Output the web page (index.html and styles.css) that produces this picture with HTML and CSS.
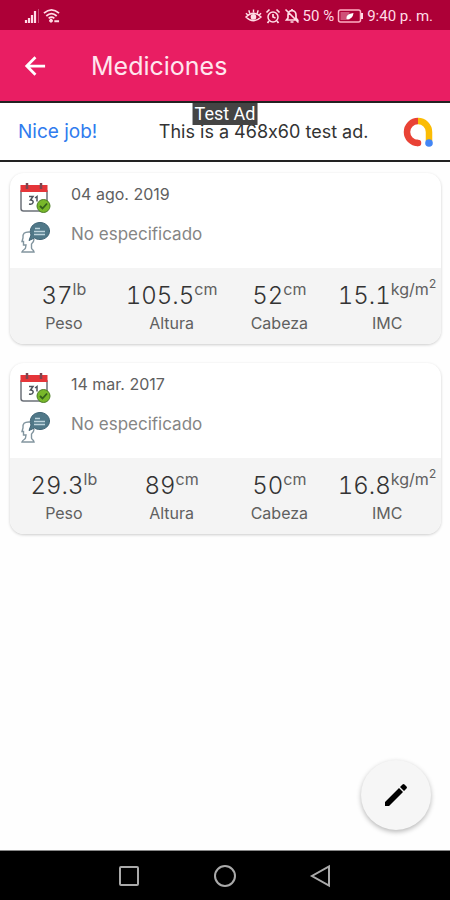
FILE: index.html
```html
<!DOCTYPE html>
<html lang="es">
<head>
<meta charset="utf-8">
<meta name="viewport" content="width=device-width, initial-scale=1">
<title>Mediciones</title>
<link rel="stylesheet" href="styles.css">
</head>
<body>
<svg class="defs" aria-hidden="true">
  <symbol id="calendar" viewBox="0 0 32 32">
    <path d="M2 10h26v17.500a2.500 2.500 0 0 1-2.500 2.500h-21A2.500 2.500 0 0 1 2 27.500z" fill="#fff" stroke="#6b7078" stroke-width="1.500"/>
    <path d="M1.500 4h27v7h-27z" fill="#e53539"/>
    <path d="M8 2v6M22 2v6" stroke="#7c4650" stroke-width="2.500"/>
    <path d="M10 15.500h4l-2.500 3.500c4 0 3.500 5-1.500 4M16 17l2-1.500v5" fill="none" stroke="#50565f" stroke-width="1.500"/>
    <circle cx="24.500" cy="25" r="6.500" fill="#78b82a" stroke="#4c7d26"/>
    <path d="m21 25 2.500 2.500 4.500-5" fill="none" stroke="#34611c" stroke-width="1.800"/>
  </symbol>
  <symbol id="comment" viewBox="0 0 32 32">
    <path d="M11 11C5 10.500 3.500 13 4 17l-1 3.500h1.500V24H7l-.5 3c0 1.500-3 1.500-3.500 4h12c-.5-2.500-2.500-2.500-2.500-4v-4c2-1.500 2.500-3 2.500-5" fill="#fff" stroke="#82959f" stroke-width="1.400"/>
    <path d="M21 1.500c5.500 0 9.500 4 9.500 8.500s-4 8.500-9.500 8.500c-2 0-4-.5-5.500-1.500L10 19.500l2-5.500C9.500 7.500 14 1.500 21 1.500z" fill="#507888" stroke="#406577"/>
    <path d="M16 7.500h5M15 10.500h11M15 13.500h11" stroke="#bdd4dd" stroke-width="1.500"/>
  </symbol>
</svg>

<div class="status">
  <div class="status-group">
    <svg class="signal" viewBox="0 0 16 16" aria-hidden="true"><path d="M2 12v3M5 10v5M8 7v8M11 3v12" stroke="#ffdce6" stroke-width="2.200"/><path d="M14.500 1v14" stroke="#c94a75"/></svg>
    <svg class="wifi" viewBox="0 0 18 16" aria-hidden="true"><path d="M1 5q8-7 16 0M3.500 8q5.500-5 11 0M6 10.500q3-2.500 6 0" fill="none" stroke="#ffdce6" stroke-width="1.900"/><path d="M8.500 11v4M6.500 13h4M12 13.500h5" stroke="#ffdce6" stroke-width="2.200"/></svg>
  </div>
  <div class="status-group">
    <svg class="eye" viewBox="0 0 18 16" aria-hidden="true"><path d="M1 9q8-8 16 0-8 8-16 0zM9 1v3M4 2l1 3M14 2l-1 3M1 5l2 2M17 5l-2 2" fill="none" stroke="#ffdce6" stroke-width="1.500"/><circle cx="9" cy="9" r="3" fill="#ffdce6"/></svg>
    <svg class="mini" viewBox="0 0 16 16" aria-hidden="true"><circle cx="8" cy="9" r="5" fill="none" stroke="#ffdce6" stroke-width="1.500"/><path d="m1.500 4.500 3-3M14.500 4.500l-3-3M8 6v3l2.500 1M4 13l-1.500 2M12 13l1.500 2" fill="none" stroke="#ffdce6" stroke-width="1.700"/></svg>
    <svg class="mini" viewBox="0 0 16 16" aria-hidden="true"><path d="M2.500 12h11L12 10V7q0-4-4-4.500Q4 3 4 7v3zM6.500 14h3M8 1v2M1.500 1.500l13 13" fill="none" stroke="#ffdce6" stroke-width="1.700"/></svg>
    <span>50 %</span>
    <svg class="battery" viewBox="0 0 26 14" aria-hidden="true"><rect x="1" y="1" width="22" height="12" rx="2" fill="none" stroke="#ffb0c4" stroke-width="1.500"/><path d="M3 3h9v8H3z" fill="#cf5078"/><path d="M24.500 4v6" stroke="#ffdce6" stroke-width="2"/><path d="M9 10q-1-5 7-6-1 7-7 6z" fill="#fff"/></svg>
    <span>9:40 p. m.</span>
  </div>
</div>

<header class="appbar">
  <button class="back" type="button" aria-label="Atrás"><svg viewBox="0 0 24 24"><path d="M23 12H3M12.500 2.500 3 12l9.500 9.500" fill="none" stroke="#fff" stroke-width="3"/></svg></button>
  <h1>Mediciones</h1>
</header>

<aside class="ad">
  <span class="ad-badge">Test Ad</span>
  <a class="ad-link" href="#">Nice job!</a>
  <span class="ad-text">This is a 468x60 test ad.</span>
  <svg class="ad-logo" viewBox="0 0 32 32" aria-hidden="true">
    <path d="M16 5a11 11 0 0 1 11 11v9" fill="none" stroke="#fbbc04" stroke-width="6.500"/>
    <path d="M16 5a11 11 0 0 0 0 22" fill="none" stroke="#e94235" stroke-width="6.500"/>
    <circle cx="16" cy="27" r="3.250" fill="#e94235"/><circle cx="27" cy="27" r="3.800" fill="#4285f4"/>
  </svg>
</aside>

<main class="list">
  <article class="card">
    <div class="info">
      <svg class="icon" aria-hidden="true"><use href="#calendar"/></svg><p class="date">04 ago. 2019</p>
      <svg class="icon" aria-hidden="true"><use href="#comment"/></svg><p class="note">No especificado</p>
    </div>
    <dl class="stats">
      <div><dd>37<sup>lb</sup></dd><dt>Peso</dt></div>
      <div><dd>105.5<sup>cm</sup></dd><dt>Altura</dt></div>
      <div><dd>52<sup>cm</sup></dd><dt>Cabeza</dt></div>
      <div><dd>15.1<sup>kg/m<sup>2</sup></sup></dd><dt>IMC</dt></div>
    </dl>
  </article>
  <article class="card">
    <div class="info">
      <svg class="icon" aria-hidden="true"><use href="#calendar"/></svg><p class="date">14 mar. 2017</p>
      <svg class="icon" aria-hidden="true"><use href="#comment"/></svg><p class="note">No especificado</p>
    </div>
    <dl class="stats">
      <div><dd>29.3<sup>lb</sup></dd><dt>Peso</dt></div>
      <div><dd>89<sup>cm</sup></dd><dt>Altura</dt></div>
      <div><dd>50<sup>cm</sup></dd><dt>Cabeza</dt></div>
      <div><dd>16.8<sup>kg/m<sup>2</sup></sup></dd><dt>IMC</dt></div>
    </dl>
  </article>
  <button class="fab" type="button" aria-label="Editar"><svg viewBox="0 0 24 24"><path d="M1 19 15 5l4 4L5 23H1zM16 4l2.500-2.500q1-1 2 0l2 2q1 1 0 2L20 8z" fill="#000"/></svg></button>
</main>

<nav class="navbar">
  <button type="button" aria-label="Recientes"><svg viewBox="0 0 24 24"><rect x="3" y="3" width="18" height="18" rx="1"/></svg></button>
  <button type="button" aria-label="Inicio"><svg viewBox="0 0 24 24"><circle cx="12" cy="12" r="10"/></svg></button>
  <button type="button" aria-label="Volver"><svg viewBox="0 0 24 24"><path d="M20 2.500v19L3 12z"/></svg></button>
</nav>
</body>
</html>
```
FILE: styles.css
```css
* { box-sizing: border-box; }

body {
  margin: 0;
  min-height: 100vh;
  display: flex;
  flex-direction: column;
  background: #fefefe;
  font-family: Inter, sans-serif;
}

button {
  border: 0;
  padding: 0;
  background: none;
  display: flex;
  align-items: center;
  justify-content: center;
}

h1, p, dl, dd { margin: 0; }
.defs { position: absolute; width: 0; height: 0; }

.status {
  height: 30px;
  padding: 2px 17px 0 24px;
  display: flex;
  justify-content: space-between;
  align-items: center;
  background: #ad0037;
  color: #ffdce6;
  font: 400 15px/20px Roboto, sans-serif;
}
.status-group { display: flex; align-items: center; gap: 3px; }
.signal, .mini { width: 16px; height: 16px; }
.wifi, .eye { width: 17px; height: 16px; }
.battery { width: 27px; height: 14px; }

.appbar {
  height: 71px;
  padding: 0 24px;
  display: flex;
  align-items: center;
  gap: 45px;
  background: #e91e63;
  color: #ffe6ee;
}
.appbar h1 { font-size: 25px; line-height: 32px; font-weight: 400; }
.back svg { width: 22px; height: 24px; }

.ad {
  position: relative;
  height: 61px;
  padding: 0 16px 0 18px;
  display: flex;
  align-items: center;
  justify-content: space-between;
  background: #fff;
  border-top: 2px solid #222;
  border-bottom: 2px solid #222;
  font-size: 18px;
  line-height: 24px;
  font-feature-settings: "calt" 0;
}
.ad-link { color: #2f7bee; font-size: 19px; text-decoration: none; }
.ad-text { color: #333; margin-left: 28px; }
.ad-logo { width: 32px; height: 32px; }
.ad-badge {
  position: absolute;
  top: 0;
  left: 50%;
  transform: translateX(-50%);
  padding: 0 2px;
  background: #444;
  color: #fff;
  font: 400 18px/22px Roboto, sans-serif;
  white-space: nowrap;
}

.list {
  flex: 1;
  padding: 11px 9px 20px 10px;
  display: flex;
  flex-direction: column;
  gap: 19px;
}
.card {
  border-radius: 14px;
  overflow: hidden;
  background: #fff;
  box-shadow: 0 1px 3px rgba(0, 0, 0, 0.2);
}
.info {
  padding: 8px 9px 15px;
  display: grid;
  grid-template-columns: 32px 1fr;
  grid-auto-rows: 32px;
  gap: 8px 20px;
}
.info p { font-size: 17px; line-height: 26px; }
.icon { width: 32px; height: 32px; }
.info .date { font-size: 16px; color: #606060; }
.note { color: #858585; }

.stats {
  padding: 10px 0 12px;
  display: grid;
  grid-template-columns: repeat(4, 1fr);
  background: #f4f4f4;
  text-align: center;
}
.stats > div { display: flex; flex-direction: column; align-items: center; }
.stats dd {
  font-size: 24px;
  line-height: 36px;
  color: #333;
  font-weight: 300;
  font-variant-numeric: tabular-nums;
  white-space: nowrap;
}
.stats dt { font-size: 16px; line-height: 18px; color: #606060; }
.stats sup { font-size: 16px; line-height: 0; font-weight: 400; color: #606060; vertical-align: 9px; }
.stats sup sup { font-size: 12px; vertical-align: 7px; }

.fab {
  width: 70px;
  height: 70px;
  margin: auto 10px 0 auto;
  border-radius: 50%;
  background: #f6f6f6;
  box-shadow: 0 2px 5px rgba(0, 0, 0, 0.28);
}
.fab svg { width: 24px; height: 24px; }

.navbar {
  height: 50px;
  padding: 0 117px;
  display: flex;
  align-items: center;
  justify-content: space-between;
  background: #000;
  border-top: 1px solid #888;
}
.navbar svg { width: 24px; height: 24px; fill: none; stroke: #aaa; stroke-width: 2; }
```
